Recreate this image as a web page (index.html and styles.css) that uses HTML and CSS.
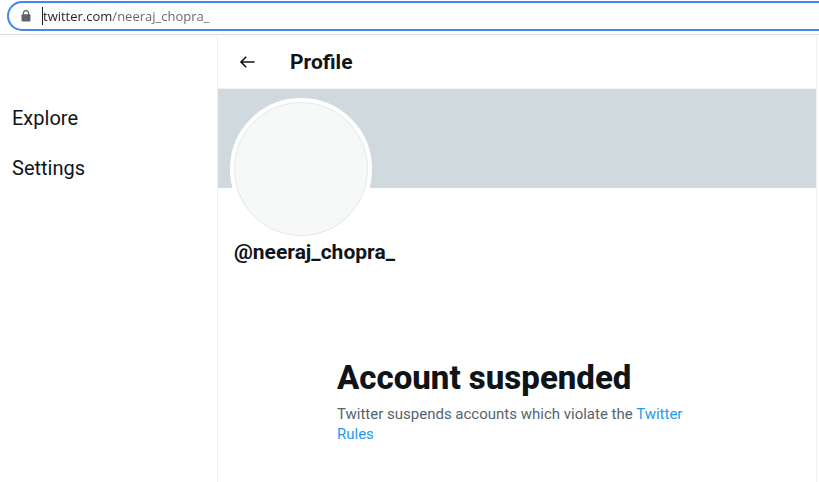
FILE: index.html
```
<!DOCTYPE html>
<html lang="en">
<head>
<meta charset="UTF-8">
<meta name="viewport" content="width=device-width, initial-scale=1.0">
<title>Profile / Twitter</title>
<link rel="stylesheet" href="styles.css">
</head>
<body>
  <div class="toolbar">
    <div class="address-bar">
      <svg class="lock" viewBox="0 0 10 12" width="10" height="12" aria-hidden="true">
        <path d="M2.5 5V3a2.5 2.4 0 0 1 5 0v2" fill="none" stroke="#5f6368" stroke-width="1.3"/>
        <rect x="0.5" y="4.2" width="9" height="7.3" rx="1" fill="#5f6368"/>
      </svg>
      <span class="caret"></span>
      <input class="url" type="text" aria-label="Address" value="twitter.com/neeraj_chopra_" spellcheck="false">
    </div>
  </div>

  <div class="page">
    <nav class="sidebar">
      <a href="#explore">Explore</a>
      <a href="#settings">Settings</a>
    </nav>

    <main class="profile">
      <header class="profile-header">
        <button class="back" type="button" aria-label="Back">
          <svg viewBox="0 0 20 20" width="20" height="20">
            <path d="M16.6 10H3.2M8.2 4.8L3 10L8.2 15.2" fill="none" stroke="#0f1419" stroke-width="1.6"/>
          </svg>
        </button>
        <h2>Profile</h2>
      </header>

      <div class="banner"></div>

      <div class="user">
        <div class="avatar"></div>
        <div class="handle">@neeraj_chopra_</div>
      </div>

      <div class="notice">
        <h1>Account suspended</h1>
        <p>Twitter suspends accounts which violate the <a href="#rules">Twitter Rules</a></p>
      </div>
    </main>
  </div>
</body>
</html>
```
FILE: styles.css
```
* {
  box-sizing: border-box;
}

body {
  margin: 0;
  min-height: 100vh;
  display: flex;
  flex-direction: column;
  background-color: #fff;
  color: #0f1419;
  font-family: Roboto, "Liberation Sans", sans-serif;
}

h1, h2, p {
  margin: 0;
}

a {
  text-decoration: none;
}

/* browser toolbar */
.toolbar {
  padding: 1px 0 3px 7px;
  border-bottom: 1px solid #dadce0;
}

.address-bar {
  display: flex;
  align-items: center;
  height: 30px;
  padding-left: 12px;
  border: 2px solid #4285f4;
  border-right: none;
  border-radius: 15px 0 0 15px;
}

.lock {
  flex: none;
}

.caret {
  width: 1px;
  height: 18px;
  margin-left: 11px;
  background-color: #202124;
}

.url {
  flex: 1;
  min-width: 0;
  padding: 0;
  border: none;
  outline: none;
  /* domain dark, path grey */
  background: linear-gradient(to right, #202124 69px, #5f6368 69px);
  -webkit-background-clip: text;
  background-clip: text;
  color: transparent;
  font-family: "Open Sans", "Noto Sans", sans-serif;
  font-size: 13px;
}

/* page */
.page {
  flex: 1;
  display: flex;
  padding-right: 2px;
}

.sidebar {
  width: 217px;
  flex: none;
  display: flex;
  flex-direction: column;
  gap: 26px;
  padding: 71px 12px 0;
}

.sidebar a {
  color: #0f1419;
  font-size: 20px;
  line-height: 24px;
}

.profile {
  flex: 1;
  min-width: 0;
  border-left: 1px solid #eff3f4;
  border-right: 1px solid #eff3f4;
}

.profile-header {
  display: flex;
  align-items: center;
  gap: 32px;
  height: 54px;
  padding-left: 20px;
  border-bottom: 1px solid #eff3f4;
}

.back {
  display: flex;
  padding: 0;
  border: none;
  background: none;
  cursor: pointer;
}

.profile-header h2,
.handle {
  font-size: 21px;
  font-weight: bold;
  line-height: 24px;
}

.banner {
  height: 99px;
  background-color: #cfd9de;
}

.user {
  padding: 0 12px;
}

.avatar {
  width: 142px;
  height: 142px;
  margin-top: -90px;
  border: 4px solid #fff;
  border-radius: 50%;
  background-color: #f7f9f9;
  box-shadow: inset 0 0 0 1px #e3e8e8;
}

.handle {
  padding-left: 4px;
}

.notice {
  max-width: 360px;
  margin: 96px auto 0;
}

.notice h1 {
  margin-bottom: 8px;
  font-size: 33px;
  font-weight: 800;
  line-height: 36px;
}

.notice p {
  color: #536471;
  font-size: 15px;
  line-height: 20px;
}

.notice p a {
  color: #1d9bf0;
}
```
